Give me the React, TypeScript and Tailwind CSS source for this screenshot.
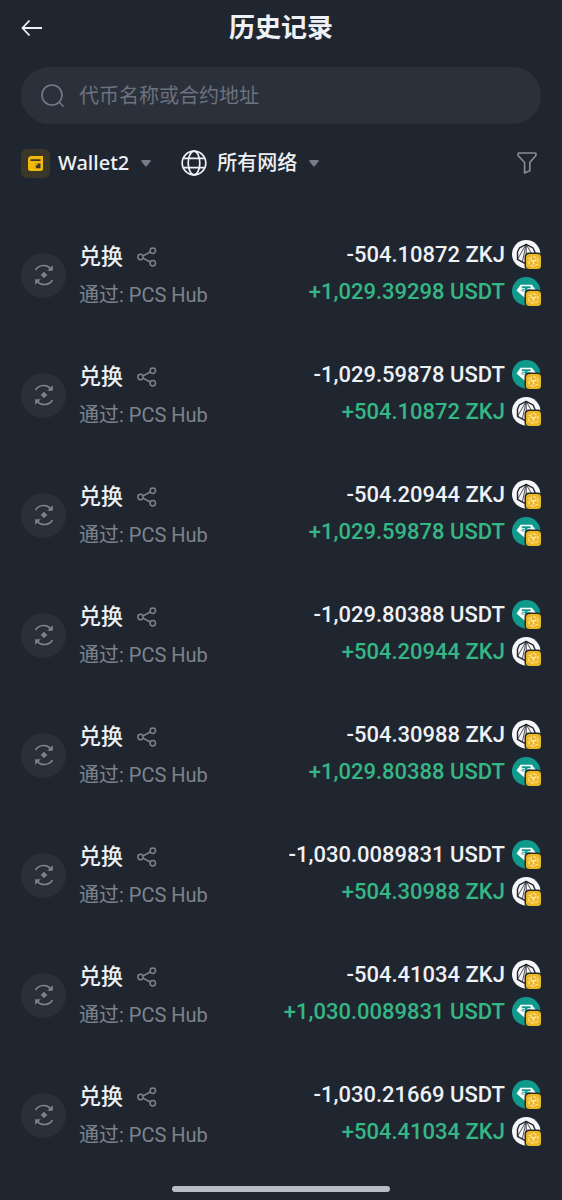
import { ReactNode } from "react";

type Token = "ZKJ" | "USDT";

type Swap = {
	sent: string;
	sentToken: Token;
	received: string;
	receivedToken: Token;
};

const swaps: Swap[] = [
	{ sent: "-504.10872", sentToken: "ZKJ", received: "+1,029.39298", receivedToken: "USDT" },
	{ sent: "-1,029.59878", sentToken: "USDT", received: "+504.10872", receivedToken: "ZKJ" },
	{ sent: "-504.20944", sentToken: "ZKJ", received: "+1,029.59878", receivedToken: "USDT" },
	{ sent: "-1,029.80388", sentToken: "USDT", received: "+504.20944", receivedToken: "ZKJ" },
	{ sent: "-504.30988", sentToken: "ZKJ", received: "+1,029.80388", receivedToken: "USDT" },
	{ sent: "-1,030.0089831", sentToken: "USDT", received: "+504.30988", receivedToken: "ZKJ" },
	{ sent: "-504.41034", sentToken: "ZKJ", received: "+1,030.0089831", receivedToken: "USDT" },
	{ sent: "-1,030.21669", sentToken: "USDT", received: "+504.41034", receivedToken: "ZKJ" },
];

function BackIcon() {
	return (
		<svg width="22" height="18" viewBox="0 0 22 18" fill="none" stroke="currentColor" strokeWidth="1.8">
			<path d="M21 9H1.5M8.500 1.500 1.500 9l7 7.500" />
		</svg>
	);
}

function SearchIcon() {
	return (
		<svg width="24" height="24" viewBox="0 0 24 24" fill="none" stroke="currentColor" strokeWidth="1.6">
			<circle cx="11" cy="11" r="10" />
			<path d="m18 18 4.500 4.500" />
		</svg>
	);
}

function WalletIcon() {
	return (
		<span className="flex size-[29px] items-center justify-center rounded-md bg-[#3a3628]">
			<svg width="15" height="15" viewBox="0 0 15 15">
				<path fill="#f0b90b" d="M3.500 0H15v13a2 2 0 0 1-2 2H2.500A2.500 2.500 0 0 1 0 12.500v-9A3.500 3.500 0 0 1 3.500 0Z" />
				<path fill="#3a3628" d="M2.500 3.200h10v1.800h-10zM7.800 7.500h4.700v4.700H7.800z" />
				<path fill="#f0b90b" d="M7.800 7.500h1.800v1.800H7.800z" />
			</svg>
		</span>
	);
}

function CaretIcon() {
	return (
		<svg width="10" height="7" viewBox="0 0 10 7" fill="#767d89">
			<path d="M1.200 0h7.600a.9.9 0 0 1 .7 1.500L5.700 6.200a.9.9 0 0 1-1.400 0L.5 1.500A.9.9 0 0 1 1.200 0Z" />
		</svg>
	);
}

function GlobeIcon() {
	return (
		<svg width="26" height="26" viewBox="0 0 26 26" fill="none" stroke="currentColor" strokeWidth="1.700">
			<circle cx="13" cy="13" r="11.800" />
			<ellipse cx="13" cy="13" rx="5.800" ry="11.800" />
			<path d="M2.800 8.300h20.400M2.800 17.700h20.400" />
		</svg>
	);
}

function FilterIcon() {
	return (
		<svg width="20" height="22" viewBox="0 0 20 22" fill="none" stroke="currentColor" strokeWidth="1.700" strokeLinejoin="round">
			<path d="M1.800 1h16.400a.8.8 0 0 1 .7 1.200v1.300L12.800 10.500v8.300L7.600 21V10.500L1.100 3.500V1.800A.8.8 0 0 1 1.800 1Z" />
		</svg>
	);
}

function SwapIcon() {
	return (
		<span className="flex size-[45px] shrink-0 items-center justify-center rounded-full bg-[#2a303a]">
			<svg width="20" height="22" viewBox="0 0 20 22" fill="none" stroke="#7d838d" strokeWidth="1.600">
				<path d="M1.500 6C5 .2 13 .2 16.500 4.500" />
				<path d="M18.800 1.200v5.600h-5.600Z" fill="#7d838d" stroke="none" />
				<path d="M18.500 16C15 21.800 7 21.800 3.500 17.500" />
				<path d="M1.200 20.800v-5.600h5.600Z" fill="#7d838d" stroke="none" />
				<path d="m10 7.700 3.300 3.300-3.300 3.300L6.700 11Z" fill="#7d838d" stroke="none" />
			</svg>
		</span>
	);
}

function ShareIcon() {
	return (
		<svg width="20" height="20" viewBox="0 0 20 20" fill="none" stroke="currentColor" strokeWidth="1.500">
			<circle cx="3.500" cy="10" r="2.700" />
			<circle cx="15.800" cy="3.700" r="2.700" />
			<circle cx="15.800" cy="16.300" r="2.700" />
			<path d="m6 8.800 7.300-3.800M6 11.200l7.300 3.800" />
		</svg>
	);
}

/* Token logo with the small gold chain badge on the lower right */
function TokenIcon({ token }: { token: Token }) {
	return (
		<svg className="shrink-0" width="29" height="29" viewBox="0 0 29 29" fill="none">
			{token === "ZKJ" ? (
				<>
					<circle cx="14.200" cy="14.200" r="14.200" fill="#f6f7fb" />
					<path
						d="M14.200 4.300 7.500 7.800 5.500 12v7.300l8.700 4.900 8.700-4.900V12l-2-4.200Z"
						stroke="#23262c"
						strokeWidth="1.400"
						strokeLinejoin="round"
					/>
					<path d="M14.200 4.300 5.500 19.300M14.200 4.300 10.300 22M14.200 4.300v19.900M14.200 4.300 22.900 19.300" stroke="#23262c" strokeWidth=".8" />
				</>
			) : (
				<>
					<circle cx="14.200" cy="14.200" r="14.200" fill="#109a8e" />
					<path d="M8.500 7.800h11.400l4.300 5.700-10 8.500-9.700-8.500Z" fill="#fff" />
					<path d="M9.800 9.300h8.800v1.900h-3.300v7.300h-2.200v-7.300H9.800Z" fill="#109a8e" />
					<ellipse cx="14.200" cy="13.300" rx="4.800" ry="1" stroke="#109a8e" strokeWidth=".8" />
				</>
			)}
			<rect x="12.500" y="12.500" width="18" height="18" rx="4.500" fill="#2b2a26" />
			<rect x="14" y="14" width="15" height="15" rx="3.500" fill="#eab726" />
			<path d="m21.500 16.300 4.400 2.600v5.200l-4.400 2.600-4.400-2.600v-5.200Z" stroke="#fbe9b0" strokeWidth="1.100" strokeDasharray="3.600 1.500" />
			<path d="m18.600 19.700 2.900 1.700 2.900-1.700M21.500 21.400v3" stroke="#fbe9b0" strokeWidth="1.400" />
		</svg>
	);
}

function Amount({ token, children }: { token: Token; children: ReactNode }) {
	return (
		<div className="flex items-center gap-[7px]">
			<span className="text-[22px] leading-[29px] font-medium whitespace-nowrap">
				{children} {token}
			</span>
			<TokenIcon token={token} />
		</div>
	);
}

function SwapRow({ swap }: { swap: Swap }) {
	return (
		<li className="flex h-[120px] items-center">
			<SwapIcon />
			<div className="ml-[13px] flex flex-col gap-2">
				<div className="flex items-center gap-[14px]">
					<h2 className="text-[22px] leading-8 font-medium">兑换</h2>
					<button type="button" aria-label="分享" className="text-[#7d838d]">
						<ShareIcon />
					</button>
				</div>
				<p className="text-[20px] leading-7 text-[#7d838d]">通过: PCS Hub</p>
			</div>
			<div className="ml-auto flex flex-col items-end gap-2 pb-1">
				<Amount token={swap.sentToken}>{swap.sent}</Amount>
				<div className="text-[#35b785]">
					<Amount token={swap.receivedToken}>{swap.received}</Amount>
				</div>
			</div>
		</li>
	);
}

export default function App() {
	return (
		<div className="flex min-h-screen flex-col bg-[#202630] font-[Roboto,'Noto_Sans_CJK_SC',sans-serif] text-[#eef1f5]">
			{/* Header */}
			<header className="grid h-14 grid-cols-[1fr_auto_1fr] items-center px-[21px]">
				<button type="button" aria-label="返回" className="justify-self-start">
					<BackIcon />
				</button>
				<h1 className="text-[26px] leading-8 font-bold">历史记录</h1>
			</header>

			<main className="px-[21px] pt-[11px]">
				{/* Search */}
				<label className="flex h-[57px] items-center gap-[14px] rounded-full bg-[#2b313b] px-5 text-[#737a86]">
					<SearchIcon />
					<input
						type="text"
						aria-label="代币名称或合约地址"
						placeholder="代币名称或合约地址"
						className="min-w-0 flex-1 bg-transparent text-[20px] leading-7 outline-none placeholder:text-[#6b7280]"
					/>
				</label>

				{/* Filters */}
				<div className="mt-[19px] flex h-10 items-center">
					<button type="button" className="flex items-center text-[20px] font-medium">
						<WalletIcon />
						<span className="mr-3 ml-2 font-['Noto_Sans']">Wallet2</span>
						<CaretIcon />
					</button>
					<button type="button" className="ml-[30px] flex items-center text-[20px] font-medium">
						<GlobeIcon />
						<span className="mr-3 ml-[10px]">所有网络</span>
						<CaretIcon />
					</button>
					<button type="button" aria-label="筛选" className="mr-1 ml-auto text-[#858b95]">
						<FilterIcon />
					</button>
				</div>

				{/* History */}
				<ul className="mt-8">
					{swaps.map((swap, i) => (
						<SwapRow key={i} swap={swap} />
					))}
				</ul>
			</main>

			{/* Home indicator */}
			<div className="mx-auto mt-auto mb-2 h-[6px] w-[218px] rounded-full bg-[#b9bdc5]" />
		</div>
	);
}
